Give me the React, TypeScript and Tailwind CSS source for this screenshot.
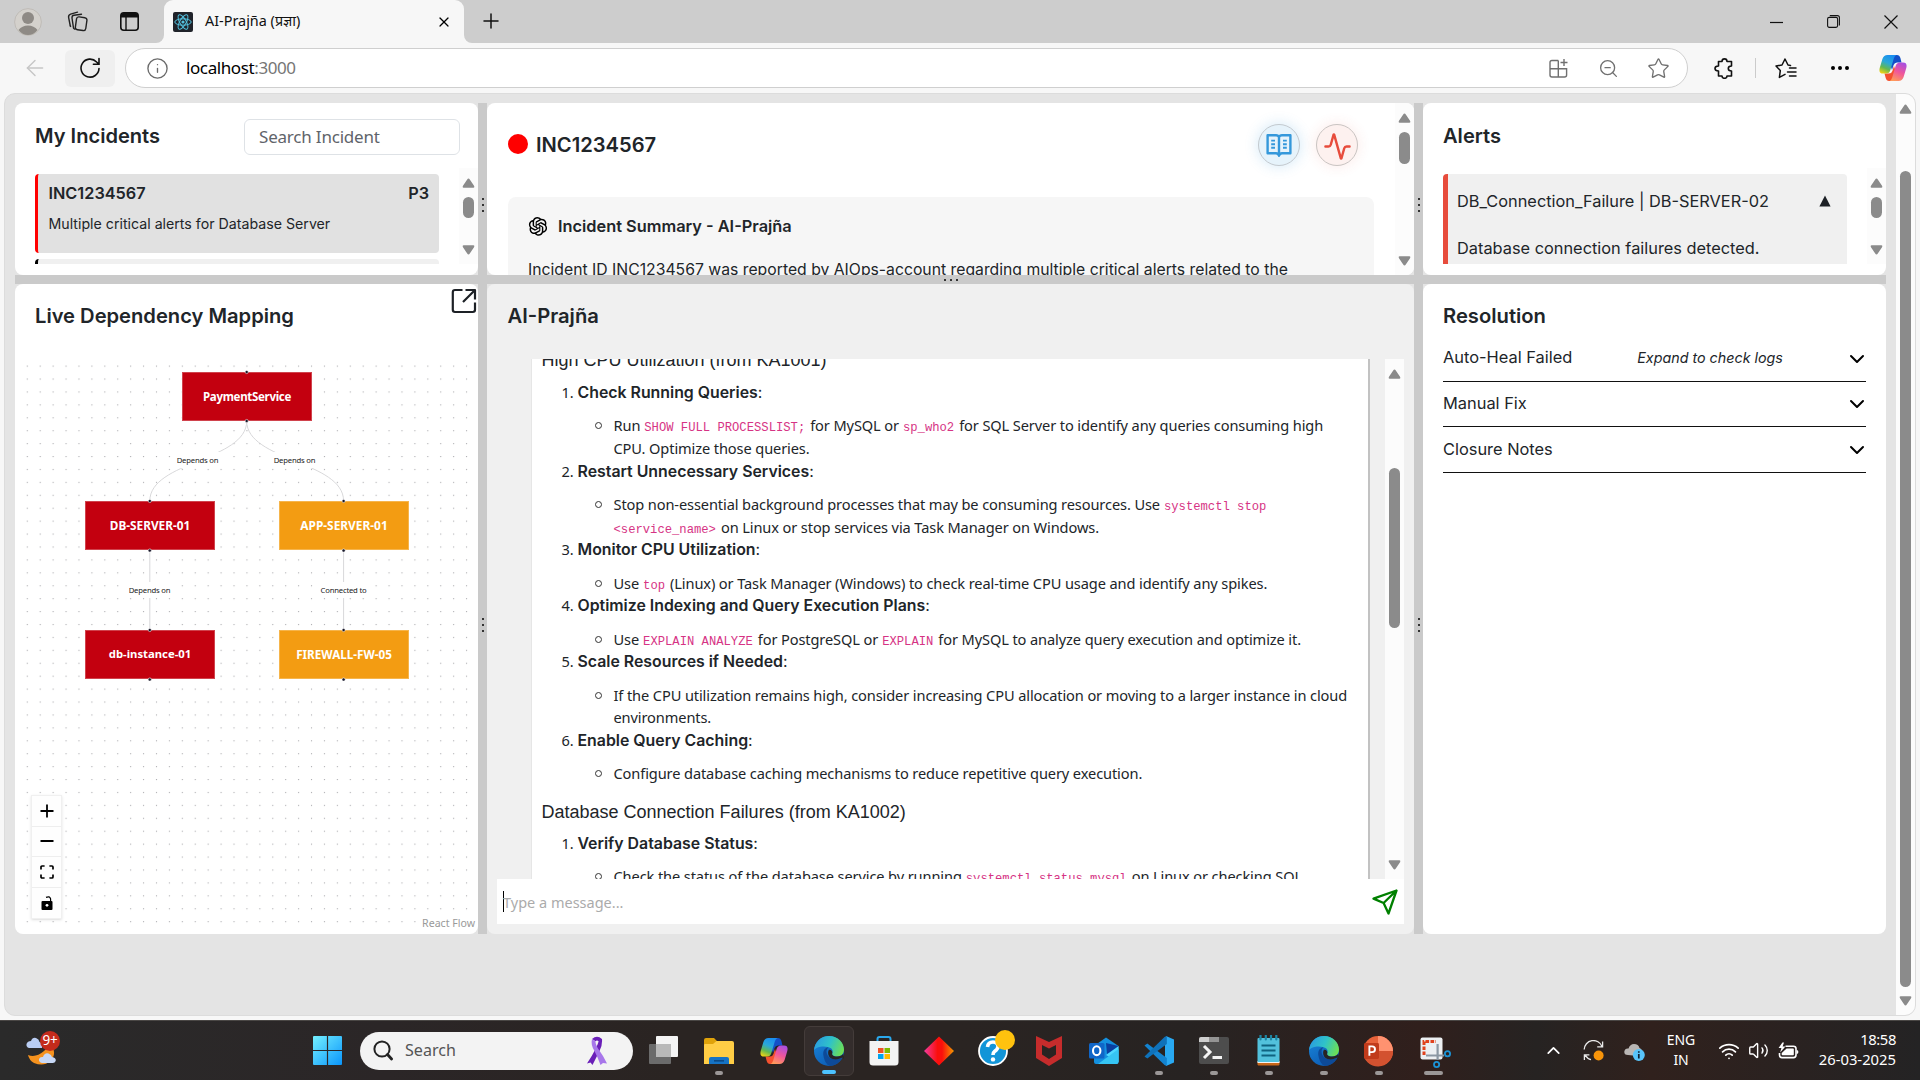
import React from 'react';
import {
  Activity,
  ArrowLeft,
  ChevronDown,
  ChevronUp,
  Ellipsis,
  Info,
  Plus,
  Star,
  Volume2,
  Wifi,
  X,
  ZoomOut,
} from 'lucide-react';
import { AiOutlineOpenAI } from 'react-icons/ai';

/* ---------- shared pieces ---------- */

function Scrollbar({ className, top, thumb }: { className: string; top: string; thumb: string }) {
  return (
    <div className={`flex w-[19px] shrink-0 flex-col items-center bg-[#fcfcfc] ${className}`}>
      <svg className="mt-[10px] h-[10px] w-[13px] shrink-0" viewBox="0 0 13 10">
        <path d="M6.5 0.5 Q7.2 0.5 7.8 1.5 L12.2 8 Q12.8 9.8 11.5 9.8 H1.5 Q0.2 9.8 0.8 8 L5.2 1.5 Q5.8 0.5 6.5 0.5Z" fill="#8b8b8b" />
      </svg>
      <div className={`w-[11px] shrink-0 rounded-full bg-[#8b8b8b] ${top} ${thumb}`} />
      <div className="grow" />
      <svg className="mb-[9px] h-[10px] w-[13px] shrink-0 rotate-180" viewBox="0 0 13 10">
        <path d="M6.5 0.5 Q7.2 0.5 7.8 1.5 L12.2 8 Q12.8 9.8 11.5 9.8 H1.5 Q0.2 9.8 0.8 8 L5.2 1.5 Q5.8 0.5 6.5 0.5Z" fill="#8b8b8b" />
      </svg>
    </div>
  );
}

function Grip({ className }: { className: string }) {
  return (
    <div className={`flex gap-1 ${className}`}>
      <i className="size-[2px] bg-[#333]" />
      <i className="size-[2px] bg-[#333]" />
      <i className="size-[2px] bg-[#333]" />
    </div>
  );
}

function Copilot({ className }: { className: string }) {
  return (
    <svg className={className} viewBox="0 0 28 28">
      <defs>
        <linearGradient id="cpA" x1="0.6" y1="0" x2="0.2" y2="1">
          <stop offset="0" stopColor="#1a8ff0" />
          <stop offset="0.4" stopColor="#2aa8d8" />
          <stop offset="0.7" stopColor="#62b852" />
          <stop offset="1" stopColor="#f3d413" />
        </linearGradient>
        <linearGradient id="cpB" x1="0.7" y1="0" x2="0.3" y2="1">
          <stop offset="0" stopColor="#a84fe0" />
          <stop offset="0.5" stopColor="#f0569b" />
          <stop offset="1" stopColor="#ff9a5a" />
        </linearGradient>
      </defs>
      <path d="M13 1 H18 Q20.5 1 21.4 4 L22.5 8.5 H18 Q15.5 8.5 14.6 11 L13 16 L11 10Z" fill="#1350c8" />
      <path d="M15 27 H10 Q7.5 27 6.7 24 L5.5 19.5 H10 Q12.5 19.5 13.4 17 L15 12 L17 18Z" fill="#f4512f" />
      <path d="M8.5 1 H17.5 Q15.6 1.6 14.8 4.5 L11.4 16 Q10.4 19.6 7 19.6 H4 Q-0.6 19.6 0.7 14 L3.4 5 Q4.8 1 8.5 1Z" fill="url(#cpA)" />
      <path d="M19.5 27 H10.5 Q12.4 26.4 13.2 23.5 L16.6 12 Q17.6 8.4 21 8.4 H24 Q28.6 8.4 27.3 14 L24.6 23 Q23.2 27 19.5 27Z" fill="url(#cpB)" />
    </svg>
  );
}

function EdgeLogo() {
  return (
    <svg className="size-[30px]" viewBox="0 0 30 30">
      <defs>
        <linearGradient id="egTop" x1="0" y1="0.3" x2="1" y2="0.6">
          <stop offset="0" stopColor="#2a9be0" />
          <stop offset="0.5" stopColor="#2fc2c9" />
          <stop offset="1" stopColor="#6ee052" />
        </linearGradient>
        <linearGradient id="egLow" x1="0" y1="0" x2="0.6" y2="1">
          <stop offset="0" stopColor="#1b88dc" />
          <stop offset="1" stopColor="#0c5cb4" />
        </linearGradient>
      </defs>
      <circle cx="15" cy="15" r="15" fill="url(#egLow)" />
      <path d="M0 14.5 C0.5 6 7 0 15 0 C24 0 30 6.5 30 13.5 C30 18 26.8 20.6 23 20.6 C19.5 20.6 17.6 19 18.2 17.6 C19.4 15.6 18.6 12 14.5 11.3 C9 9.5 2 11 0 14.5Z" fill="url(#egTop)" />
      <path d="M9.5 20 C8.5 15.5 10.5 11.8 14.5 11.3 C11.6 13.6 12 18.5 15.5 21.5 C19.5 24.5 25 23.6 28.3 21.8 C25 27.5 20.5 30 16 30 C12.5 29 10.3 24.5 9.5 20Z" fill="#0d4a98" />
      <path d="M18.2 17.6 C17.6 19 19.5 20.6 23 20.6 C26 20.6 28 19.6 29.2 17.8 L30 23 L28.3 21.6 C25 23.6 19.5 24.5 16.2 21.8 C13.6 19 13.8 15.4 15 13.8 C17.6 13.6 18.8 15.8 18.2 17.6Z" fill="#282423" />
    </svg>
  );
}

/* ---------- browser chrome ---------- */

function TabBar() {
  return (
    <div className="flex h-[43px] items-center bg-[#cdcdcd] pr-[15px]">
      <svg className="ml-[14px] size-[28px]" viewBox="0 0 28 28">
        <circle cx="14" cy="14" r="13.4" fill="#d4d1cc" stroke="#bfbcb7" />
        <circle cx="14" cy="10" r="6" fill="#8e8a85" />
        <path d="M4.5 22 Q8 17.5 14 17.5 Q20 17.5 23.5 22 Q20 27 14 27 Q8 27 4.5 22Z" fill="#8e8a85" />
      </svg>
      <svg className="ml-[25px] size-[21px]" viewBox="0 0 21 21" fill="none" stroke="#222" strokeWidth="1.4">
        <rect x="9" y="6.2" width="10.5" height="13" rx="2.4" transform="rotate(8 14 12)" />
        <path d="M6.5 17 L5 7 Q4.8 4.5 7 4.2 L14.5 3.2 M3.2 14.5 L1.6 6.5 Q1.2 4 3.6 3.2 L10.5 1.2" strokeLinecap="round" />
        <path d="M6.5 17 Q7 18 8 18.3 M3.2 14.5 Q3.4 15.3 4 15.8" />
      </svg>
      <svg className="ml-[32px] size-[19px]" viewBox="0 0 19 19">
        <rect x="0.8" y="0.8" width="17.4" height="17.4" rx="3" fill="none" stroke="#111" strokeWidth="1.6" />
        <path d="M1 5.5 V3.5 Q1 1 3.5 1 H15.5 Q18 1 18 3.5 V5.5Z" fill="#111" />
        <path d="M6 5 V18" stroke="#111" strokeWidth="1.4" />
      </svg>
      <div className="ml-[17px] h-full w-[8px] bg-[#f7f7f7]">
        <div className="h-full w-full rounded-br-[8px] bg-[#cdcdcd]" />
      </div>
      <div className="flex h-full w-[300px] items-center rounded-t-[9px] bg-[#f7f7f7] pr-[12px] pl-[9px]">
        <svg className="size-[20px] shrink-0" viewBox="0 0 20 20">
          <rect width="20" height="20" rx="2" fill="#20232a" />
          <g fill="none" stroke="#53c1de" strokeWidth="1">
            <ellipse cx="10" cy="10" rx="8.2" ry="3.2" />
            <ellipse cx="10" cy="10" rx="8.2" ry="3.2" transform="rotate(60 10 10)" />
            <ellipse cx="10" cy="10" rx="8.2" ry="3.2" transform="rotate(120 10 10)" />
          </g>
          <circle cx="10" cy="10" r="1.6" fill="#53c1de" />
        </svg>
        <span className="mb-[2px] ml-3 text-[14.4px] whitespace-nowrap text-[#111]">AI-Prajña (प्रज्ञा)</span>
        <X className="ml-auto size-[16px] text-black" strokeWidth={1.8} />
      </div>
      <div className="h-full w-[8px] bg-[#f7f7f7]">
        <div className="h-full w-full rounded-bl-[8px] bg-[#cdcdcd]" />
      </div>
      <Plus className="mb-[2px] ml-[7px] size-[24px] text-[#111]" strokeWidth={1.5} />
      <svg className="ml-auto h-[16px] w-[13px]" viewBox="0 0 13 16">
        <path d="M0 8.5 H13" stroke="#111" strokeWidth="1.2" />
      </svg>
      <svg className="ml-[44px] size-[13px]" viewBox="0 0 13 13" fill="none" stroke="#111" strokeWidth="1.1">
        <rect x="0.6" y="2.4" width="10" height="10" rx="1.6" />
        <path d="M2.8 0.6 H10.4 Q12.4 0.6 12.4 2.6 V10.4" />
      </svg>
      <svg className="mr-[7px] ml-[44px] size-[14px]" viewBox="0 0 14 14">
        <path d="M0.5 0.5 L13.5 13.5 M13.5 0.5 L0.5 13.5" stroke="#111" strokeWidth="1.2" />
      </svg>
    </div>
  );
}

function AddressBar() {
  return (
    <div className="flex h-[50px] items-center bg-[#f7f7f7]">
      <ArrowLeft className="ml-[22px] size-[26px] text-[#c6c6c6]" strokeWidth={1.3} />
      <div className="ml-[17px] flex h-[37px] w-[50px] items-center justify-center rounded-md bg-[#efefef]">
        <svg className="size-[22px]" viewBox="0 0 22 22" fill="none" stroke="#111" strokeWidth="1.6" strokeLinecap="round">
          <path d="M20 11.5 A9 9 0 1 1 17.6 5 L20 7.2 M20 1.6 V7.2 H14.4" />
        </svg>
      </div>
      <div className="ml-[10px] flex h-10 w-[1563px] items-center rounded-full border border-[#cfcfcf] bg-white">
        <Info className="ml-[20px] size-[23px] text-[#6b6b6b]" strokeWidth={1.4} />
        <span className="ml-[17px] text-[17px] tracking-[-0.4px] text-black">
          localhost<span className="text-[#767676]">:3000</span>
        </span>
        <svg className="ml-auto size-[19px]" viewBox="0 0 19 19" fill="none" stroke="#707070" strokeWidth="1.4">
          <path d="M9.3 1.5 H3 Q1 1.5 1 3.5 V16 Q1 18 3 18 H15.6 Q17.6 18 17.6 16 V9.7 H1 M9.3 1.5 V18" />
          <path d="M15 0 V7 M11.5 3.5 H18.5" />
        </svg>
        <ZoomOut className="ml-[30px] size-[21px] text-[#707070]" strokeWidth={1.5} />
        <Star className="mr-[17px] ml-[28px] size-[23px] text-[#707070]" strokeWidth={1.4} />
      </div>
      <svg className="ml-[26px] size-[21px]" viewBox="0 0 21 21" fill="none" stroke="#111" strokeWidth="1.6" strokeLinejoin="round">
        <path d="M4.5 3.5 H8 Q8 0.9 10.5 0.9 Q13 0.9 13 3.5 H17.5 V8 Q14.3 8 14.3 10.5 Q14.3 13 17.5 13 V18 H13 Q13 20.3 10.5 20.3 Q8 20.3 8 18 H4.5 V13 Q1 13 1 10.5 Q1 8 4.5 8Z" />
      </svg>
      <div className="ml-[20px] h-5 w-px bg-[#cbcbcb]" />
      <svg className="ml-[19px] h-[21px] w-[22px]" viewBox="0 0 22 21" fill="none" stroke="#111" strokeWidth="1.5" strokeLinejoin="round" strokeLinecap="round">
        <path d="M15.5 7.5 L13 7 L10 1 L7 7 L1 8 L5.3 12.6 L4.4 19.4 L10 16.4" />
        <path d="M14.5 10 H21 M12.5 14 H21 M14.5 18 H21" />
      </svg>
      <Ellipsis className="ml-[31px] size-[24px] text-black" strokeWidth={2} />
      <Copilot className="ml-[27px] size-[28px]" />
    </div>
  );
}

/* ---------- left column ---------- */

function Incidents() {
  return (
    <section className="flex h-[172px] flex-col overflow-hidden rounded-lg bg-white">
      <div className="flex h-[65px] items-center justify-between pt-[2px] pr-[18px] pl-[20px]">
        <h2 className="font-[Inter] text-[20.1px] font-semibold">My Incidents</h2>
        <div className="flex h-9 w-[216px] items-center rounded-md border border-[#dee2e6] pl-[14px] text-[17px] tracking-[-0.2px] text-[#5f646a]">Search Incident</div>
      </div>
      <div className="flex h-[96px] overflow-hidden pl-5">
        <div className="mr-[20px] grow pt-[6px]">
          <div className="h-[79px] rounded-[4px] border-l-[3px] border-[#f00] bg-[#e1e1e1] pr-[10px] pl-[10.5px]">
            <div className="flex justify-between pt-[7px] font-[Inter] text-[16.3px] leading-[24px] font-semibold">
              <span>INC1234567</span>
              <span>P3</span>
            </div>
            <p className="mt-[8px] font-[Inter] text-[14.2px] leading-[22px]">Multiple critical alerts for Database Server</p>
          </div>
          <div className="mt-[6px] h-10 rounded-[4px] border-l-[3px] border-black bg-[#f0f0f0]" />
        </div>
        <Scrollbar className="h-[96px]" top="mt-[9px]" thumb="h-[21px]" />
      </div>
    </section>
  );
}

const nodes = [
  { label: 'PaymentService', cls: 'left-[147px] top-[17px] bg-[#c3000f] border-[#d0434d] text-[11.5px] tracking-[-0.3px]' },
  { label: 'DB-SERVER-01', cls: 'left-[50px] top-[146px] bg-[#c3000f] border-[#d0434d] text-[11.8px]' },
  { label: 'APP-SERVER-01', cls: 'left-[244px] top-[146px] bg-[#f39c12] border-[#f6b54c] text-[11.9px]' },
  { label: 'db-instance-01', cls: 'left-[50px] top-[275px] bg-[#c3000f] border-[#d0434d] text-[11.3px]' },
  { label: 'FIREWALL-FW-05', cls: 'left-[244px] top-[275px] bg-[#f39c12] border-[#f6b54c] text-[11.7px]' },
];

const labels = [
  { label: 'Depends on', cls: 'left-[137px] top-[97px]' },
  { label: 'Depends on', cls: 'left-[234px] top-[97px]' },
  { label: 'Depends on', cls: 'left-[89px] top-[227px]' },
  { label: 'Connected to', cls: 'left-[283px] top-[227px]' },
];

const handles: [number, number][] = [
  [211.7, 17], [211.7, 66], [114.8, 146], [114.8, 195.5], [308.6, 146], [308.6, 195.5],
  [114.8, 275], [114.8, 324.5], [308.6, 275], [308.6, 324.5],
];

function DependencyMap() {
  return (
    <section className="relative flex h-[650px] flex-col overflow-hidden rounded-lg bg-white">
      <h2 className="pt-[17px] pl-[20px] font-[Inter] text-[20.15px] leading-[30px] font-semibold">Live Dependency Mapping</h2>
      <svg className="absolute top-[4px] right-[1px] size-[26px]" viewBox="0 0 26 26" fill="none" stroke="#1d2126" strokeWidth="2.2" strokeLinejoin="round">
        <path d="M11.5 2 H4 Q1.8 2 1.8 4.2 V21.8 Q1.8 24 4 24 H21.8 Q24 24 24 21.8 V14.5" />
        <path d="M14.5 2 H24 V11.5 M24 2 L12 14" />
      </svg>
      <div className="relative mt-[24px] ml-5 h-[575px]">
        <svg className="absolute inset-y-0 left-[-10px] h-full w-[453px]" viewBox="0 0 453 575" preserveAspectRatio="none">
          <defs>
            <pattern id="dots" x="-2.2" y="4.6" width="12.92" height="12.92" patternUnits="userSpaceOnUse">
              <circle cx="4.5" cy="6.5" r="0.65" fill="#a3a3a8" />
            </pattern>
          </defs>
          <rect x="0" y="8" width="444" height="567" fill="url(#dots)" />
        </svg>
        <svg className="absolute inset-0 size-full" viewBox="0 0 443 575" preserveAspectRatio="none" fill="none" stroke="#d8d8da">
          <path d="M211.7 66 C211.7 106 114.8 106 114.8 146 M211.7 66 C211.7 106 308.6 106 308.6 146 M114.8 195 V275 M308.6 195 V275" />
        </svg>
        {labels.map((l, i) => (
          <span key={i} className={`absolute w-[51px] bg-white text-center text-[7.7px] leading-[16px] tracking-[-0.2px] whitespace-nowrap text-[#222] ${l.cls}`}>{l.label}</span>
        ))}
        {nodes.map((n) => (
          <div key={n.label} className={`absolute flex h-[49px] w-[130px] items-center justify-center border font-bold whitespace-nowrap text-white ${n.cls}`}>{n.label}</div>
        ))}
        <svg className="absolute inset-0 size-full" viewBox="0 0 443 575" preserveAspectRatio="none" fill="#1a192b">
          {handles.map(([x, y], i) => (
            <circle key={i} cx={x} cy={y} r="1.6" stroke="#fff" strokeWidth="0.5" />
          ))}
        </svg>
        <div className="absolute top-[440px] left-[-4px] flex w-[31px] flex-col divide-y divide-[#eee] border border-[#f0f0f0] bg-[#fefefe] shadow-sm [&>*]:h-[30.5px]">
          <div className="flex items-center justify-center">
            <svg className="size-[14px]" viewBox="0 0 14 14"><path d="M0.5 7 H13.5 M7 0.5 V13.5" stroke="#000" strokeWidth="1.8" /></svg>
          </div>
          <div className="flex items-center justify-center">
            <svg className="size-[14px]" viewBox="0 0 14 14"><path d="M0.5 7 H13.5" stroke="#000" strokeWidth="1.9" /></svg>
          </div>
          <div className="flex items-center justify-center">
            <svg className="size-[14px]" viewBox="0 0 14 14" fill="none" stroke="#000" strokeWidth="1.7">
              <path d="M1 4.6 V2 Q1 1 2 1 H4.6 M9.4 1 H12 Q13 1 13 2 V4.6 M13 9.4 V12 Q13 13 12 13 H9.4 M4.6 13 H2 Q1 13 1 12 V9.4" />
            </svg>
          </div>
          <div className="flex items-center justify-center">
            <svg className="h-[14px] w-[12px]" viewBox="0 0 12 14">
              <rect x="0.5" y="5" width="11" height="9" rx="1" fill="#000" />
              <path d="M5 1.4 Q8.8 -0.4 9.6 3 V5.4" fill="none" stroke="#000" strokeWidth="1.2" />
              <circle cx="6" cy="9.3" r="1.4" fill="#fff" />
            </svg>
          </div>
        </div>
        <span className="absolute right-[3px] bottom-[-1px] bg-white pl-[6px] text-[10.6px] leading-[16px] text-[#999]">React Flow</span>
      </div>
    </section>
  );
}

/* ---------- middle column ---------- */

function IncidentDetail() {
  return (
    <section className="flex h-[172px] overflow-hidden rounded-lg bg-white">
      <div className="flex w-[887px] flex-col pl-[21px]">
        <div className="flex h-[84px] shrink-0 items-center pr-[16px]">
          <span className="mb-[2px] size-5 rounded-full bg-[#f00]" />
          <h2 className="ml-2 font-[Inter] text-[20.15px] font-semibold">INC1234567</h2>
          <span className="ml-auto flex size-[42px] items-center justify-center rounded-full border border-[#c3c9ce] bg-[#e6f3fb] shadow-[0_0_14px_rgba(52,152,219,0.22)]">
            <svg className="size-[28px]" viewBox="0 0 28 28" fill="none" stroke="#3498db" strokeWidth="2.4" strokeLinejoin="round">
              <path d="M14 6.2 Q13.4 4.2 11 4.2 H2.6 V22.2 H11 Q13.4 22.2 14 24.8 Q14.6 22.2 17 22.2 H25.4 V4.2 H17 Q14.6 4.2 14 6.2 V24" />
              <path d="M6.2 9.6 H10 M6.2 13.2 H10 M6.2 16.8 H10 M18 9.6 H21.8 M18 13.2 H21.8 M18 16.8 H21.8" strokeWidth="1.9" />
            </svg>
          </span>
          <span className="ml-[16px] flex size-[42px] items-center justify-center rounded-full border border-[#c9c4c2] bg-[#fdf1ef] shadow-[0_0_14px_rgba(231,76,60,0.12)]">
            <Activity className="mt-[2px] size-[29px] text-[#e74c3c]" strokeWidth={2} />
          </span>
        </div>
        <div className="mt-[10px] h-[200px] shrink-0 rounded-lg bg-[#f6f6f6] px-5 pt-[17px]">
          <div className="flex items-center">
            <AiOutlineOpenAI className="-ml-[2px] size-[24px] text-black" />
            <h3 className="ml-[8px] font-[Inter] text-[16.35px] leading-[24px] font-semibold">Incident Summary - AI-Prajña</h3>
          </div>
          <p className="mt-[20px] font-[Inter] text-[15.75px] leading-[24px] whitespace-nowrap">
            Incident ID INC1234567 was reported by AIOps-account regarding multiple critical alerts related to the
          </p>
        </div>
      </div>
      <Scrollbar className="ml-[21px] h-[172px]" top="mt-[9px]" thumb="h-[32px]" />
    </section>
  );
}

function Code({ children }: { children: React.ReactNode }) {
  return <code className="mr-[5px] ml-[4px] font-['Liberation_Mono',monospace] text-[12.2px] leading-none tracking-normal text-[#d63384]">{children}</code>;
}

function Step({ n, title, children }: { n: number; title: string; children: React.ReactNode }) {
  return (
    <li className="flex">
      <span className="w-[36px] shrink-0 pr-[4px] text-right leading-[22.5px]">{n}.</span>
      <div>
        <p className="pt-[1px] font-[Inter] text-[15.87px] leading-[22.5px] tracking-normal">
          <b className="font-semibold">{title}</b>:
        </p>
        <div className="mt-[9.8px] flex">
          <span className="mt-[8px] mr-[12px] ml-[17px] size-[7px] shrink-0 rounded-full border-[1.5px] border-[#333]" />
          <div className="leading-[22.7px] whitespace-nowrap">{children}</div>
        </div>
      </div>
    </li>
  );
}

function Chat() {
  return (
    <section className="flex h-[650px] flex-col overflow-hidden rounded-lg bg-[#f0f0f0]">
      <h2 className="h-[75px] shrink-0 pt-[17px] pl-[20.5px] font-[Inter] text-[20.2px] leading-[30px] font-semibold">AI-Prajña</h2>
      <div className="flex h-[520px] shrink-0 overflow-hidden pl-[44px]">
        <div className="w-[839px] shrink-0 overflow-hidden border-r-2 border-l border-r-[#c2c2c2] border-l-[#e6e6e6] bg-white pl-[9.5px] text-[14.6px] tracking-[-0.11px]">
          <h3 className="mt-[-12px] font-['Liberation_Sans',sans-serif] text-[18px] leading-[26px] tracking-normal">High CPU Utilization (from KA1001)</h3>
          <ol className="mt-[8px]">
            <Step n={1} title="Check Running Queries">
              Run<Code>SHOW FULL PROCESSLIST;</Code>for MySQL or<Code>sp_who2</Code>for SQL Server to identify any queries consuming high
              <br />
              CPU. Optimize those queries.
            </Step>
            <Step n={2} title="Restart Unnecessary Services">
              Stop non-essential background processes that may be consuming resources. Use<Code>systemctl stop</Code>
              <br />
              <span className="-ml-[4px]"><Code>&lt;service_name&gt;</Code></span>on Linux or stop services via Task Manager on Windows.
            </Step>
            <Step n={3} title="Monitor CPU Utilization">
              Use<Code>top</Code>(Linux) or Task Manager (Windows) to check real-time CPU usage and identify any spikes.
            </Step>
            <Step n={4} title="Optimize Indexing and Query Execution Plans">
              Use<Code>EXPLAIN ANALYZE</Code>for PostgreSQL or<Code>EXPLAIN</Code>for MySQL to analyze query execution and optimize it.
            </Step>
            <Step n={5} title="Scale Resources if Needed">
              If the CPU utilization remains high, consider increasing CPU allocation or moving to a larger instance in cloud
              <br />
              environments.
            </Step>
            <Step n={6} title="Enable Query Caching">Configure database caching mechanisms to reduce repetitive query execution.</Step>
          </ol>
          <h3 className="mt-[14px] font-['Liberation_Sans',sans-serif] text-[18px] leading-[26px] tracking-normal">Database Connection Failures (from KA1002)</h3>
          <ol className="mt-[7px]">
            <Step n={1} title="Verify Database Status">
              Check the status of the database service by running<Code>systemctl status mysql</Code>on Linux or checking SQL
            </Step>
          </ol>
        </div>
        <Scrollbar className="ml-[15px] h-[520px]" top="mt-[89px]" thumb="h-[160px]" />
      </div>
      <div className="mr-[10px] ml-[10px] flex h-[45px] items-center bg-white pl-[6px]">
        <span className="h-[21px] w-px bg-black" />
        <span className="-ml-px text-[14.5px] leading-[24px] text-[#ababab]">Type a message...</span>
        <svg className="mr-[6px] ml-auto size-[26px]" viewBox="0 0 26 26" fill="none" stroke="#008000" strokeWidth="2.3" strokeLinejoin="round">
          <path d="M24.5 1.5 L1.5 9.6 L11.6 14 L16.5 24.5Z M24.5 1.5 L11.6 14" />
        </svg>
      </div>
    </section>
  );
}

/* ---------- right column ---------- */

function Alerts() {
  return (
    <section className="flex h-[172px] flex-col overflow-hidden rounded-lg bg-white">
      <h2 className="h-[65px] pt-[18px] pl-5 font-[Inter] text-[20.1px] leading-[30px] font-semibold">Alerts</h2>
      <div className="flex h-[96px] overflow-hidden pl-5">
        <div className="mt-[6px] mr-[20px] h-[120px] grow rounded-[4px] border-l-[5px] border-[#e74c3c] bg-[#f0f0f0] pl-[9px] font-[Inter] text-[16.35px]">
          <div className="flex justify-between pt-[15px] leading-[24px]">
            <span>DB_Connection_Failure | DB-SERVER-02</span>
            <svg className="mt-[6px] mr-[16px] h-[12px] w-[12px]" viewBox="0 0 12 12"><path d="M6 0.5 L11.6 11.5 H0.4Z" fill="#1d2126" /></svg>
          </div>
          <p className="mt-[23px] leading-[24px]">Database connection failures detected.</p>
        </div>
        <Scrollbar className="h-[96px]" top="mt-[9px]" thumb="h-[21px]" />
      </div>
    </section>
  );
}

const resolutionRows = [
  { name: 'Auto-Heal Failed', note: 'Expand to check logs', cls: 'h-[46px] pb-[2px]' },
  { name: 'Manual Fix', note: '', cls: 'h-[45px] pb-[2px]' },
  { name: 'Closure Notes', note: '', cls: 'h-[46px] pb-[1px]' },
];

function Resolution() {
  return (
    <section className="h-[650px] rounded-lg bg-white px-5 pt-[17px]">
      <h2 className="font-[Inter] text-[20.2px] leading-[30px] font-semibold">Resolution</h2>
      <div className="mt-[5px]">
        {resolutionRows.map((r) => (
          <div key={r.name} className={`flex items-center border-b border-[#111] font-[Inter] text-[16.4px] ${r.cls}`}>
            <span>{r.name}</span>
            {r.note && <em className="ml-[65px] text-[14.3px]">{r.note}</em>}
            <ChevronDown className="mt-[2px] -mr-[3px] ml-auto size-[24px] text-black" strokeWidth={2} />
          </div>
        ))}
      </div>
    </section>
  );
}

/* ---------- taskbar ---------- */

function Slot({ children, mark, active }: { children: React.ReactNode; mark?: string; active?: boolean }) {
  return (
    <div className={`relative mx-[2.5px] flex h-[50px] w-[50px] shrink-0 items-center justify-center rounded-md ${active ? 'border border-[#443c3a] bg-[#342d2c]' : ''}`}>
      {children}
      {mark && <i className={`absolute bottom-[1px] h-[4px] rounded-full ${mark}`} />}
    </div>
  );
}

const dot = 'w-2 bg-[#9b9797]';

function Taskbar() {
  return (
    <footer className="flex h-[60px] items-center border-t border-[#4a4745] bg-[linear-gradient(90deg,#2a2a2a,#2b2627_20%,#2a2422_35%,#2a2422_50%,#272322_62%,#301f1c_74%,#262322_80%,#30211d_86%,#242324)] text-white">
      <div className="relative mb-[6px] ml-[26px] size-[34px]">
        <svg className="size-[34px]" viewBox="0 0 34 34">
          <path d="M2 24 Q10 27 18 20 Q22 16 26 14 Q31 24 24 30 Q18 36 8 32 Q3 29 2 24Z" fill="#f5921e" />
          <path d="M3 17 Q0 16 0.5 13 Q1.5 10 5 10 Q6.5 6 10 7 Q13 8 13.5 11 Q17 12 16 17Z" fill="#b9cdf3" />
          <path d="M16 32 Q12.5 31 13 28 Q14 25.5 17 26 Q18.5 21.5 22.5 22.5 Q25.5 23.5 26 26 Q30 26.5 29.8 29.6 Q29.5 32 27 32Z" fill="#c7d8f6" />
        </svg>
        <span className="absolute top-0 left-[14px] flex size-5 items-center justify-center rounded-full bg-[#c42b1c] text-[13.5px] tracking-[-0.3px]">9+</span>
      </div>
      <svg className="ml-[253px] size-[29px]" viewBox="0 0 29 29">
        <defs>
          <linearGradient id="win" x1="0" y1="0" x2="1" y2="1">
            <stop offset="0" stopColor="#74f0ff" />
            <stop offset="1" stopColor="#0a95fb" />
          </linearGradient>
        </defs>
        <path d="M1 0 H13.9 V13.9 H0 V1 Q0 0 1 0Z M15.1 0 H28 Q29 0 29 1 V13.9 H15.1Z M0 15.1 H13.9 V29 H1 Q0 29 0 28Z M15.1 15.1 H29 V28 Q29 29 28 29 H15.1Z" fill="url(#win)" />
      </svg>
      <div className="ml-[18px] flex h-[38px] w-[273px] items-center rounded-full bg-[#f3f3f3]">
        <svg className="ml-[13px] size-[21px]" viewBox="0 0 21 21" fill="none" stroke="#222" strokeLinecap="round">
          <circle cx="9" cy="9" r="7.6" strokeWidth="2" />
          <path d="M14.5 14.5 L18.6 19" strokeWidth="2.8" />
        </svg>
        <span className="ml-[11px] text-[16.1px] text-[#555]">Search</span>
        <svg className="mr-[25px] ml-auto h-[30px] w-[22px]" viewBox="0 0 22 30">
          <path d="M6 3 Q11 -1.5 16 3 Q16.5 10 13.5 15 Q9 24 6.5 29 L4.5 26.5 L1 27.5 Q6 20 9 14 Q12 8 12.6 5.2 Q11 4 9.4 5.2 Z" fill="#6a1fb8" />
          <path d="M6 3 Q4.5 9 8.5 15 Q12 22 14.5 29 L17 27 L21 27.5 Q17.5 20 13 14 Q9.6 9 9.4 5.2Z" fill="#a877ea" />
        </svg>
      </div>
      <div className="ml-[3px] flex">
        <Slot>
          <svg className="size-[29px]" viewBox="0 0 29 29">
            <rect x="7" y="0" width="22" height="21" rx="1" fill="#f4f4f4" />
            <rect x="0" y="8" width="22" height="20" rx="1" fill="#6b6b6b" />
            <rect x="7" y="8" width="15" height="13" fill="#b9b9b9" />
          </svg>
        </Slot>
        <Slot mark={dot}>
          <svg className="h-[28px] w-[30px]" viewBox="0 0 30 28">
            <path d="M0 3 Q0 1 2 1 H10 L13 4 H20 V12 H0Z" fill="#dfa20a" />
            <path d="M0 8 Q0 7 1 7 H9 L12.5 4 H28 Q30 4 30 6 V27 H0Z" fill="#ffcd45" />
            <path d="M5 27 V22 Q5 20 7 20 H23 Q25 20 25 22 V27Z" fill="#1673c4" />
            <rect x="10" y="23" width="10" height="1.6" fill="#0b4a86" />
          </svg>
        </Slot>
        <Slot><Copilot className="size-[28px]" /></Slot>
        <Slot active mark="w-[14px] bg-[#4cc2ff]"><EdgeLogo /></Slot>
        <Slot>
          <svg className="size-[30px]" viewBox="0 0 30 30">
            <path d="M8.5 6 V3 Q8.5 1 10.5 1 H19.5 Q21.5 1 21.5 3 V6" fill="none" stroke="#2aa8ec" strokeWidth="2" />
            <path d="M0.5 5 H29.5 V26 Q29.5 29.5 26 29.5 H4 Q0.5 29.5 0.5 26Z" fill="#f3f3f3" />
            <path d="M9 12 H14.5 V17 H9Z" fill="#f05125" />
            <path d="M15.5 12 H21 V17 H15.5Z" fill="#7fba00" />
            <path d="M9 18 H14.5 V23 H9Z" fill="#00a4ef" />
            <path d="M15.5 18 H21 V23 H15.5Z" fill="#ffb900" />
          </svg>
        </Slot>
        <Slot>
          <svg className="size-[30px]" viewBox="0 0 30 30">
            <defs>
              <linearGradient id="dia" x1="0" y1="0" x2="1" y2="0">
                <stop offset="0" stopColor="#f23ca0" />
                <stop offset="0.45" stopColor="#fa0f0c" />
                <stop offset="0.6" stopColor="#fa0f0c" />
                <stop offset="1" stopColor="#f29a00" />
              </linearGradient>
            </defs>
            <path d="M15 0.5 L30 15 L15 29.5 L0 15Z" fill="url(#dia)" />
          </svg>
        </Slot>
        <Slot>
          <svg className="h-[36px] w-[38px] translate-x-[2px] -translate-y-[3px]" viewBox="0 0 38 36">
            <circle cx="16" cy="21" r="14" fill="#1295d8" stroke="#fff" strokeWidth="1.8" />
            <path d="M10.5 17 Q11 12 16 12 Q21 12 21 16.5 Q21 19 17.5 21.5 Q16 22.6 16 25" fill="none" stroke="#fff" strokeWidth="3.6" />
            <circle cx="16" cy="29.4" r="2.2" fill="#fff" />
            <circle cx="28" cy="10" r="10" fill="#ffc20e" />
          </svg>
        </Slot>
        <Slot>
          <svg className="h-[30px] w-[28px]" viewBox="0 0 28 30">
            <path d="M1 0 L14 6 L27 0 V22 L14 30 L1 22Z M7 9 V18.5 L14 23 L21 18.5 V9 L14 12.4Z" fill="#c62c2c" fillRule="evenodd" />
          </svg>
        </Slot>
        <Slot>
          <svg className="h-[28px] w-[30px]" viewBox="0 0 30 28">
            <path d="M5 9 L17 0.5 L29.5 9 V25 Q29.5 27 27.5 27 H7 Q5 27 5 25Z" fill="#1490df" />
            <path d="M29.5 9 L17 18 L29.5 25Z" fill="#50d9ff" />
            <path d="M9 27 L29.5 12 V25 Q29.5 27 27.5 27Z" fill="#36c5f4" />
            <path d="M17 6 L29.5 9 L18 17Z" fill="#0a3fa0" />
            <rect x="0" y="6" width="15.5" height="15.5" rx="1.5" fill="#1066c8" />
            <ellipse cx="7.7" cy="13.7" rx="3.7" ry="4.4" fill="none" stroke="#fff" strokeWidth="2.1" />
          </svg>
        </Slot>
        <Slot mark={dot}>
          <svg className="size-[30px]" viewBox="0 0 30 30">
            <path d="M22 0 L30 3.4 V26.6 L22 30 L21 24 V6Z" fill="#29a9f2" />
            <path d="M0.5 9.5 L3.3 7.4 L22.8 22 V30 L20.5 29Z" fill="#1383d0" />
            <path d="M0.5 20.5 L3.3 22.6 L22.8 8 V0 L20.5 1Z" fill="#0f72ba" />
          </svg>
        </Slot>
        <Slot mark={dot}>
          <svg className="h-[27px] w-[30px]" viewBox="0 0 30 27">
            <path d="M0 2 Q0 0 2 0 H28 Q30 0 30 2 V25 Q30 27 28 27 H2 Q0 27 0 25Z" fill="#4d4d4d" />
            <path d="M0 5 V2 Q0 0 2 0 H10 V5Z" fill="#cfcfcf" />
            <path d="M10 0 H20 V5 H10Z" fill="#949494" />
            <path d="M5 9 L11 15 L5 21" fill="none" stroke="#f4f4f4" strokeWidth="3" />
            <path d="M13.5 20.5 H23" stroke="#f4f4f4" strokeWidth="3" />
          </svg>
        </Slot>
        <Slot mark={dot}>
          <svg className="h-[31px] w-[23px]" viewBox="0 0 23 31">
            <rect x="0.5" y="26" width="22" height="4.4" rx="0.8" fill="#c8671a" />
            <rect x="0.5" y="26" width="22" height="2" fill="#f2f2f2" />
            <rect x="0.5" y="3" width="22" height="24" rx="1" fill="#52c1dc" />
            <path d="M4.5 10.5 H18.5 M4.5 15.5 H18.5 M4.5 20.5 H18.5" stroke="#0f6380" strokeWidth="1.8" />
            <path d="M3.5 0.5 V4.5 M8.8 0.5 V4.5 M14 0.5 V4.5 M19.3 0.5 V4.5" stroke="#1c86a4" strokeWidth="2.2" strokeLinecap="round" />
          </svg>
        </Slot>
        <Slot mark={dot}><EdgeLogo /></Slot>
        <Slot mark={dot}>
          <svg className="h-[32px] w-[29px]" viewBox="0 0 29 32">
            <circle cx="14" cy="16" r="15" fill="#e8623a" />
            <path d="M14 1 A15 15 0 0 1 29 16 H14Z" fill="#ff9270" />
            <path d="M-1 16 H29 A15 15 0 0 1 -1 17Z" fill="#d35230" />
            <rect x="0" y="8" width="15" height="16" rx="1.4" fill="#c13b1b" />
            <path d="M5.4 20.7 V11.4 H8 Q11 11.4 11 14.2 Q11 17.1 8 17.1 H5.4" fill="none" stroke="#fff" strokeWidth="1.9" />
          </svg>
        </Slot>
        <Slot mark="w-[19px] bg-[#9b9797]">
          <svg className="h-[31px] w-[31px] translate-x-[2px] translate-y-[2px]" viewBox="0 0 31 31">
            <rect x="0.5" y="0.5" width="22" height="22" rx="2" fill="#eceff2" />
            <path d="M4 18 V4.5 H16" fill="none" stroke="#e1421d" strokeWidth="3" strokeDasharray="3.6 1.4" />
            <path d="M17.6 7 V23 M6 18.5 H24" stroke="#8b97a3" strokeWidth="2.2" />
            <circle cx="16.6" cy="27.5" r="2.6" fill="none" stroke="#1b93d6" strokeWidth="1.8" />
            <circle cx="27.5" cy="16.8" r="2.6" fill="none" stroke="#1b93d6" strokeWidth="1.8" />
          </svg>
        </Slot>
      </div>
      <div className="ml-auto flex items-center pr-[24px]">
        <ChevronUp className="size-[21px]" strokeWidth={2} />
        <svg className="ml-[19px] size-[21px]" viewBox="0 0 21 21" fill="none" stroke="#e9e9e9" strokeWidth="1.3">
          <path d="M1.2 9.5 A9.2 9.2 0 0 1 19 6.5 M19.6 1.5 V6.8 H14.2 M8 19.6 Q4.5 19 2.2 15.2 M1.4 20 V14.8 H6.4" />
          <circle cx="15.6" cy="15.5" r="5" fill="#f7940a" stroke="none" />
        </svg>
        <svg className="mt-[3px] ml-[20px] h-[18px] w-[21px]" viewBox="0 0 21 18">
          <path d="M4 12 Q0 12 0.3 8.5 Q1 5 4.5 5.5 Q6 1 10 1 Q14.5 1 15.5 5 Q18.5 6 18 10 L14 13Z" fill="#b9b6b4" />
          <circle cx="14.8" cy="12" r="6" fill="#58c4fa" />
          <path d="M14.8 8.2 V9.8 M14.8 11 V15.4" stroke="#123" strokeWidth="1.7" />
        </svg>
        <div className="mb-[2px] ml-[21px] w-[30px] text-center text-[14px] leading-[20px] tracking-[-0.1px]">
          ENG
          <br />
          IN
        </div>
        <Wifi className="ml-[22px] size-[22px]" strokeWidth={1.9} />
        <Volume2 className="ml-[8px] size-[21px]" strokeWidth={1.6} />
        <svg className="ml-[9px] h-[18px] w-[21px]" viewBox="0 0 21 18" fill="none" stroke="#fff">
          <path d="M7.5 4.2 H15.5 Q18 4.2 18 6.6 V13 Q18 15.6 15.5 15.6 H4 Q1.5 15.6 1.5 13 V11" strokeWidth="1.6" />
          <path d="M18.6 8 Q20.4 8 20.4 10 Q20.4 12 18.6 12Z" fill="#fff" stroke="none" />
          <path d="M8.6 6.6 H15 Q15.8 6.6 15.8 7.4 V12.4 Q15.8 13.2 15 13.2 H4.4 Q3.7 13.2 3.7 12.4 V11Z" fill="#fff" stroke="none" />
          <path d="M4.4 0.6 L0.6 6 H3.4 L2.2 10.4 L7.4 4.6 H4.6 L6 0.6Z" fill="#fff" stroke="none" />
        </svg>
        <div className="mb-[3px] ml-[18px] w-[79px] text-right text-[14.8px] leading-[20px] whitespace-nowrap">
          <span className="tracking-[-0.4px]">18:58</span>
          <br />
          26-03-2025
        </div>
      </div>
    </footer>
  );
}

export default function App() {
  return (
    <div className="flex h-[1080px] w-[1920px] flex-col overflow-hidden bg-[#f7f7f7] font-['Noto_Sans','Open_Sans',sans-serif] text-[#212529]">
      <TabBar />
      <AddressBar />
      <main className="mb-[4px] ml-[4px] flex h-[923px] w-[1912px] overflow-hidden rounded-[11px] border border-[#dcdcdc] bg-[#e4e4e4]">
        <div className="mt-[9px] ml-[10px] flex h-[831px] w-[1871px]">
          <div className="flex w-[463px] flex-col">
            <Incidents />
            <div className="h-[9px] bg-[#cacaca]" />
            <DependencyMap />
          </div>
          <div className="flex w-[9px] flex-col items-center bg-[#cacaca]">
            <Grip className="mt-[95px] flex-col" />
            <Grip className="mt-[406px] flex-col" />
          </div>
          <div className="flex w-[927px] flex-col">
            <IncidentDetail />
            <div className="flex h-[9px] justify-center bg-[#cacaca]">
              <Grip className="mt-[4px]" />
            </div>
            <Chat />
          </div>
          <div className="flex w-[9px] flex-col items-center bg-[#cacaca]">
            <Grip className="mt-[95px] flex-col" />
            <Grip className="mt-[406px] flex-col" />
          </div>
          <div className="flex w-[463px] flex-col">
            <Alerts />
            <div className="h-[9px] bg-[#cacaca]" />
            <Resolution />
          </div>
        </div>
        <Scrollbar className="ml-auto h-[921px]" top="mt-[57px]" thumb="h-[816px]" />
      </main>
      <Taskbar />
    </div>
  );
}
